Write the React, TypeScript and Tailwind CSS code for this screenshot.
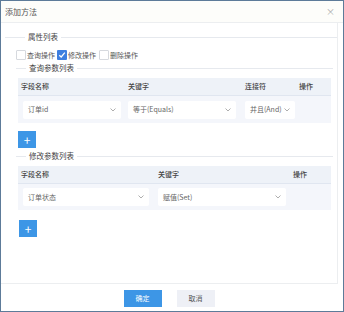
import React from "react";

const font = { fontFamily: '"Noto Sans CJK SC", "Liberation Sans", sans-serif' };

const Chevron = () => (
  <svg width="6" height="4" viewBox="0 0 6 4" className="shrink-0">
    <path d="M0.5 0.5 L3 3 L5.5 0.5" fill="none" stroke="#999" strokeWidth="0.8" />
  </svg>
);

const Legend = ({ title, left }: { title: string; left: string }) => (
  <div className="flex items-center h-[10px]">
    <div className={`${left} h-px bg-[#e6e9ee]`} />
    <span className="px-[3px] text-[7.5px] text-[#444] leading-none whitespace-nowrap">{title}</span>
    <div className="flex-1 h-px bg-[#e6e9ee]" />
  </div>
);

const Select = ({ value, w }: { value: string; w: string }) => (
  <div
    className={`${w} h-[18px] bg-white rounded-[2px] flex items-center justify-between pl-[5px] pr-[5px] text-[7px] text-[#666] whitespace-nowrap`}
  >
    <span>{value}</span>
    <Chevron />
  </div>
);

const PlusButton = () => (
  <div className="w-[18px] h-[17px] bg-[#3d96e6] flex items-center justify-center text-white text-[12px] leading-none">
    +
  </div>
);

const Check = ({ checked }: { checked?: boolean }) =>
  checked ? (
    <span className="shrink-0 w-[10px] h-[10px] rounded-[1px] bg-[#3d7fe0] flex items-center justify-center">
      <svg width="8" height="8" viewBox="0 0 8 8">
        <path d="M1.3 4.2 L3.2 6 L6.8 1.6" fill="none" stroke="white" strokeWidth="1.2" />
      </svg>
    </span>
  ) : (
    <span className="shrink-0 block w-[10px] h-[10px] rounded-[1px] border border-[#d6d9de] bg-white" />
  );

export default function App() {
  return (
    <div
      style={font}
      className="w-[344px] h-[312px] border-[1.5px] border-[#5d7b99] bg-white flex flex-col overflow-hidden"
    >
      <div className="h-[22px] shrink-0 bg-[#fdfdfa] border-b border-[#eceef0] flex items-center justify-between pl-[4px] pr-[8px]">
        <span className="text-[8px] text-[#555]">添加方法</span>
        <span className="text-[9px] text-[#aaa] leading-none">×</span>
      </div>
      <div className="flex-1 flex flex-col mr-[5px] border-r border-b border-[#eceef0]">
        <div className="pt-[9px] pl-[4px]">
          <Legend title="属性列表" left="w-[20px]" />
          <div className="pl-[11px] pr-[4px]">
            <div className="flex items-center h-[16px] mt-[5px] text-[7px] text-[#555] whitespace-nowrap">
              <Check />
              <span className="ml-[1px]">查询操作</span>
              <span className="ml-[2px]"><Check checked /></span>
              <span className="ml-[1px]">修改操作</span>
              <span className="ml-[3px]"><Check /></span>
              <span className="ml-[1px]">删除操作</span>
            </div>
            <Legend title="查询参数列表" left="w-[10px]" />
            <div className="mt-[5px] ml-[2px] mr-[2px]">
              <div className="grid grid-cols-[107px_117px_54px_1fr] h-[18px] items-center bg-[#eef2f8] border-b border-[#e0e6f0] text-[7px] text-[#444] font-medium">
                <span className="pl-[3px]">字段名称</span>
                <span className="pl-[3px]">关键字</span>
                <span className="pl-[3px]">连接符</span>
                <span className="pl-[3px]">操作</span>
              </div>
              <div className="grid grid-cols-[107px_117px_54px_1fr] h-[27px] items-center bg-[#f4f6fb]">
                <div className="pl-[5px]"><Select value="订单id" w="w-[98px]" /></div>
                <div className="pl-[3px]"><Select value="等于(Equals)" w="w-[108px]" /></div>
                <div className="pl-[3px]"><Select value="并且(And)" w="w-[50px]" /></div>
                <div />
              </div>
            </div>
            <div className="mt-[8px] ml-[2px]">
              <PlusButton />
            </div>
            <div className="mt-[3px]">
              <Legend title="修改参数列表" left="w-[10px]" />
            </div>
            <div className="mt-[5px] ml-[2px] mr-[2px]">
              <div className="grid grid-cols-[137px_135px_1fr] h-[18px] items-center bg-[#eef2f8] border-b border-[#e0e6f0] text-[7px] text-[#444] font-medium">
                <span className="pl-[3px]">字段名称</span>
                <span className="pl-[3px]">关键字</span>
                <span className="pl-[3px]">操作</span>
              </div>
              <div className="grid grid-cols-[137px_135px_1fr] h-[26px] items-center bg-[#f4f6fb]">
                <div className="pl-[5px]"><Select value="订单状态" w="w-[126px]" /></div>
                <div className="pl-[3px]"><Select value="赋值(Set)" w="w-[128px]" /></div>
                <div />
              </div>
            </div>
            <div className="mt-[10px] ml-[3px]">
              <PlusButton />
            </div>
          </div>
        </div>
      </div>
      <div className="h-[27px] shrink-0 flex items-start justify-center gap-[15px] pt-[6px] pr-[6px]">
        <div className="w-[38px] h-[17px] bg-[#3d96e6] text-white text-[7px] flex items-center justify-center">
          确定
        </div>
        <div className="w-[38px] h-[17px] bg-[#eef0f6] text-[#555] text-[7px] flex items-center justify-center">
          取消
        </div>
      </div>
    </div>
  );
}
